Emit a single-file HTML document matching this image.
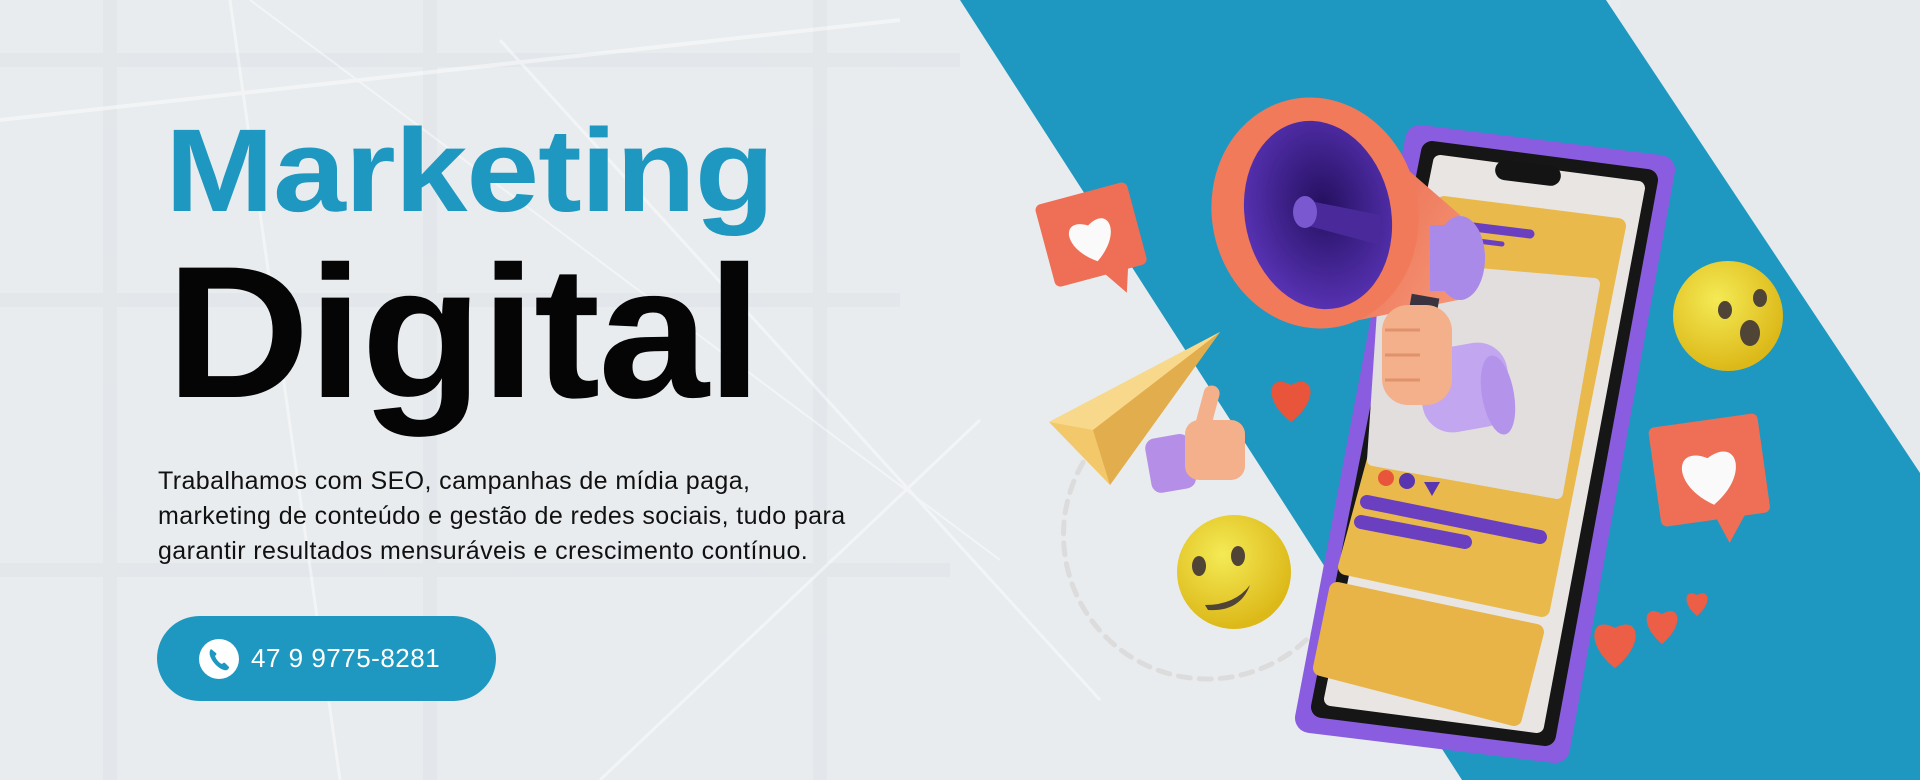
<!DOCTYPE html>
<html><head><meta charset="utf-8"><style>
html,body{margin:0;padding:0}
body{width:1920px;height:780px;overflow:hidden;position:relative;background:#e8ecee;font-family:"Liberation Sans",sans-serif}
svg.bg{position:absolute;left:0;top:0}
.t1{position:absolute;left:165px;top:112px;font-weight:bold;font-size:118px;color:#1e98c0;line-height:1;transform:scaleX(1.11);transform-origin:left top;letter-spacing:-1px}
.t2{position:absolute;left:166px;top:238px;font-weight:bold;font-size:188px;color:#050505;line-height:1;transform:scaleX(1.06);transform-origin:left top;letter-spacing:-2px}
.p{position:absolute;left:158px;top:464px;font-size:25px;letter-spacing:0.4px;line-height:35px;color:#111;width:800px}
.btn{position:absolute;left:157px;top:616px;width:339px;height:85px;border-radius:43px;background:#1e98c0}
.ic{position:absolute;left:199px;top:639px;width:40px;height:40px;border-radius:50%;background:#fff}
.num{position:absolute;left:251px;top:643px;font-size:26px;color:#fff;letter-spacing:0.5px}
</style></head><body>
<svg class="bg" width="1920" height="780" viewBox="0 0 1920 780">
<defs>
<radialGradient id="yel" cx="40%" cy="35%" r="65%"><stop offset="0" stop-color="#f4ea55"/><stop offset="1" stop-color="#dcb818"/></radialGradient>
<linearGradient id="cone" x1="0" y1="0" x2="1" y2="1"><stop offset="0" stop-color="#e8573d"/><stop offset="1" stop-color="#f59a7a"/></linearGradient>
<radialGradient id="thr" cx="55%" cy="45%" r="60%"><stop offset="0" stop-color="#251060"/><stop offset="1" stop-color="#5a34b8"/></radialGradient>
</defs>
<g stroke="#e1e6e9" stroke-width="14" fill="none" opacity="0.7">
<path d="M0 60 H960"/><path d="M0 300 H900"/><path d="M0 570 H950"/>
<path d="M110 0 V780"/><path d="M430 0 V780"/><path d="M820 0 V780"/>
</g>
<g stroke="#ffffff" fill="none" opacity="0.45">
<path d="M230 0 L340 780" stroke-width="3"/>
<path d="M0 120 L900 20" stroke-width="4"/>
<path d="M500 40 L1100 700" stroke-width="3"/>
<path d="M250 0 L1000 560" stroke-width="2"/>
<path d="M600 780 L980 420" stroke-width="3"/>
</g>
<rect x="1620" y="0" width="300" height="780" fill="#e6eaec"/>
<polygon points="960,0 1606,0 1920,473 1920,780 1462,780" fill="#1e98c0"/>
<path d="M1095 445 A122 122 0 0 0 1320 625" fill="none" stroke="#dcdcdc" stroke-width="5" stroke-dasharray="12 9" stroke-linecap="round"/>
<polygon points="1420,140 1660,170 1555,748 1310,718" fill="#8a5ce0" stroke="#8a5ce0" stroke-width="30" stroke-linejoin="round"/>
<polygon points="1432,152 1647,180 1545,735 1322,707" fill="#161616" stroke="#161616" stroke-width="22" stroke-linejoin="round"/>
<polygon points="1440,162 1638,188 1537,726 1331,699" fill="#e9e5e3" stroke="#e9e5e3" stroke-width="14" stroke-linejoin="round"/>
<rect x="1495" y="163" width="66" height="20" rx="10" fill="#141414" transform="rotate(7 1528 173)"/>
<polygon points="1444,204 1618,226 1542,609 1346,567" fill="#e9b94c" stroke="#e9b94c" stroke-width="16" stroke-linejoin="round"/>
<polygon points="1337,590 1536,632 1514,718 1321,668" fill="#e8b447" stroke="#e8b447" stroke-width="16" stroke-linejoin="round"/>
<polygon points="1386,266 1594,284 1557,493 1373,460" fill="#e2dedd" stroke="#e2dedd" stroke-width="12" stroke-linejoin="round"/>
<path d="M1367 502 L1540 537" stroke="#6a3fc0" stroke-width="14" stroke-linecap="round"/>
<path d="M1361 522 L1465 542" stroke="#6a3fc0" stroke-width="14" stroke-linecap="round"/>
<path d="M1465 226 L1530 234" stroke="#6a3fc0" stroke-width="9" stroke-linecap="round"/>
<path d="M1470 240 L1502 244" stroke="#6a3fc0" stroke-width="5" stroke-linecap="round"/>
<circle cx="1386" cy="478" r="8" fill="#e8553a"/>
<circle cx="1407" cy="481" r="8" fill="#5a35b0"/>
<polygon points="1424,482 1440,482 1432,496" fill="#5a35b0"/>
<polygon points="1325,98 1460,215 1458,300 1320,328" fill="url(#cone)"/>
<ellipse cx="1460" cy="258" rx="25" ry="42" fill="#a98ae8"/>
<rect x="1430" y="225" width="32" height="66" fill="#a98ae8"/>
<ellipse cx="1315" cy="213" rx="103" ry="116" transform="rotate(-12 1315 213)" fill="#f07a5a"/>
<ellipse cx="1318" cy="215" rx="73" ry="95" transform="rotate(-12 1318 215)" fill="url(#thr)"/>
<path d="M1305 200 L1380 215 L1380 245 L1305 225 Z" fill="#4a2a9a"/>
<ellipse cx="1305" cy="212" rx="12" ry="16" fill="#7a58d0"/>
<rect x="1410" y="296" width="28" height="18" fill="#3a3440" transform="rotate(10 1424 305)"/>
<rect x="1420" y="345" width="90" height="85" rx="30" fill="#c3a6f0" transform="rotate(-10 1465 388)"/>
<ellipse cx="1498" cy="395" rx="16" ry="40" fill="#b394ea" transform="rotate(-10 1498 395)"/>
<rect x="1382" y="305" width="70" height="100" rx="26" fill="#f4b08a"/>
<g stroke="#e0926c" stroke-width="3" fill="none"><path d="M1385 330 H1420"/><path d="M1385 355 H1420"/><path d="M1385 380 H1420"/></g>
<g transform="rotate(-15 1092 240)">
<rect x="1045" y="192" width="95" height="85" rx="6" fill="#ee6f55"/>
<polygon points="1095,275 1120,275 1112,300" fill="#ee6f55"/>
<path d="M1092 262 C1060 240 1068 210 1092 225 C1116 210 1124 240 1092 262Z" fill="#fafafa"/>
</g>
<g transform="rotate(-8 1710 475)">
<rect x="1655" y="420" width="110" height="100" rx="6" fill="#ee6f55"/>
<polygon points="1710,518 1740,518 1720,545" fill="#ee6f55"/>
<path d="M1710 505 C1670 480 1678 440 1710 458 C1742 440 1750 480 1710 505Z" fill="#fafafa"/>
</g>
<path d="M1291 422 C1262 400 1268 372 1291 385 C1314 372 1320 400 1291 422Z" fill="#e8553a"/>
<path d="M1615 668 C1585 645 1590 614 1615 628 C1640 614 1645 645 1615 668Z" fill="#ec5e45"/>
<path d="M1662 644 C1640 626 1643 603 1662 614 C1681 603 1684 626 1662 644Z" fill="#ec5e45"/>
<path d="M1697 616 C1682 604 1684 588 1697 595 C1710 588 1712 604 1697 616Z" fill="#ec5e45"/>
<polygon points="1049,422 1220,332 1110,485" fill="#f2c86a"/>
<polygon points="1049,422 1220,332 1093,430" fill="#f8d98c"/>
<polygon points="1093,430 1220,332 1110,485" fill="#e2ad4c"/>
<rect x="1148" y="436" width="45" height="55" rx="10" fill="#b58ee8" transform="rotate(-10 1170 463)"/>
<rect x="1185" y="420" width="60" height="60" rx="14" fill="#f4b08a"/>
<rect x="1200" y="385" width="16" height="45" rx="8" fill="#f4b08a" transform="rotate(15 1208 407)"/>
<circle cx="1234" cy="572" r="57" fill="url(#yel)"/>
<ellipse cx="1199" cy="566" rx="7" ry="10" fill="#504436"/>
<ellipse cx="1238" cy="556" rx="7" ry="10" fill="#504436"/>
<path d="M1205 605 Q1235 605 1250 585 Q1240 612 1208 610Z" fill="#504436"/>
<circle cx="1728" cy="316" r="55" fill="url(#yel)"/>
<ellipse cx="1725" cy="310" rx="7" ry="9" fill="#504436"/>
<ellipse cx="1760" cy="298" rx="7" ry="9" fill="#504436"/>
<ellipse cx="1750" cy="333" rx="10" ry="13" fill="#504436"/>
</svg>
<div class="t1">Marketing</div>
<div class="t2">Digital</div>
<div class="p">Trabalhamos com SEO, campanhas de mídia paga,<br>marketing de conteúdo e gestão de redes sociais, tudo para<br>garantir resultados mensuráveis e crescimento contínuo.</div>
<div class="btn"></div>
<div class="ic"><svg width="40" height="40" viewBox="0 0 40 40"><path d="M12 10 C10 12 10 16 13 21 C16 26 21 30 25 31 C28 32 30 30 30 28 L26 24 C25 23 24 24 23 25 C20 24 17 20 16 17 C17 16 18 15 17 14 Z" fill="#1e98c0"/></svg></div>
<div class="num">47 9 9775-8281</div>
</body></html>
